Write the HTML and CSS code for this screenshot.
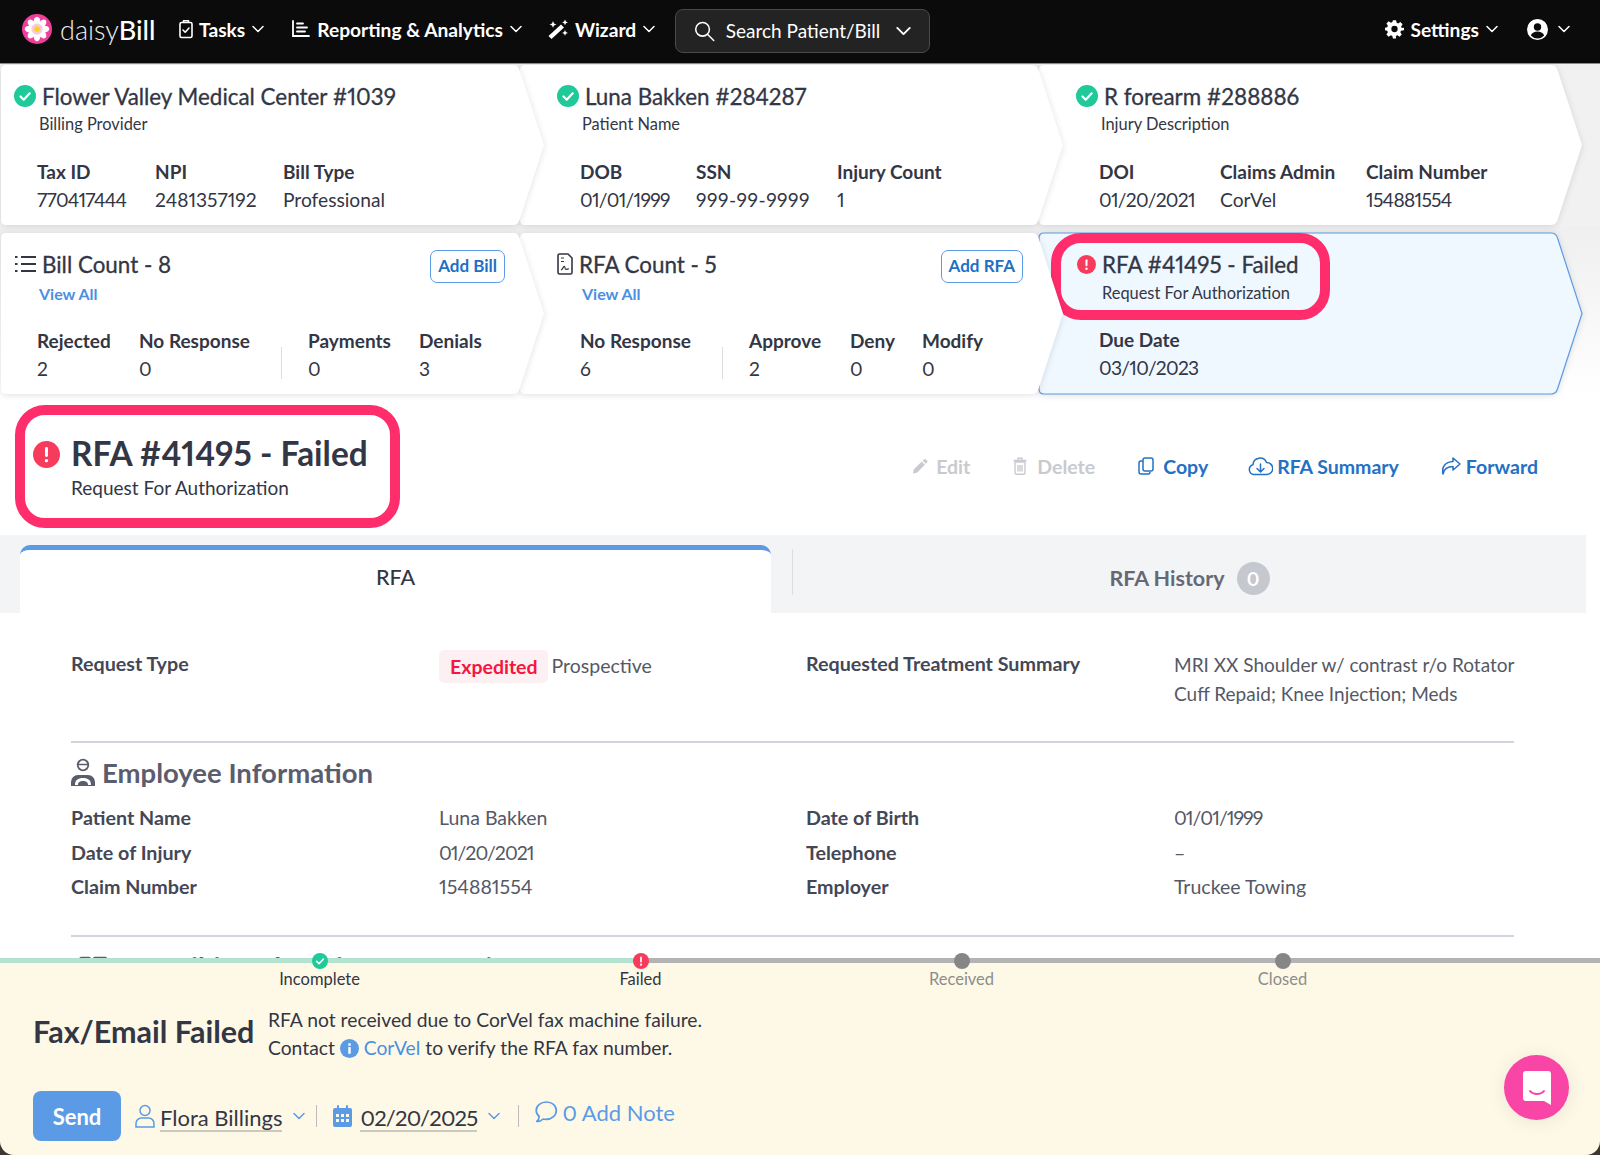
FILE: index.html
```html
<!DOCTYPE html>
<html lang="en">
<head>
  <title>daisyBill - RFA #41495</title>
  <meta charset="utf-8">
  <meta name="viewport" content="width=device-width, initial-scale=1">
  <link rel="stylesheet" href="styles.css">
</head>
<body>
  <svg class="defs" width="0" height="0" aria-hidden="true">
    <defs>
      <symbol id="chev-down" viewBox="0 0 12 8"><path d="M1 1.5l5 5 5-5" fill="none" stroke="currentColor" stroke-width="1.5" stroke-linecap="round" stroke-linejoin="round"/></symbol>
      <symbol id="ok" viewBox="0 0 22 22"><circle cx="11" cy="11" r="11" fill="#1fc99a"/><path d="M6.5 11.5l3.2 3.2 6-6.4" fill="none" stroke="#fff" stroke-width="2.2" stroke-linecap="round" stroke-linejoin="round"/></symbol>
      <symbol id="bad" viewBox="0 0 22 22"><circle cx="11" cy="11" r="11" fill="#f73b5c"/><rect x="9.8" y="4.8" width="2.4" height="8.2" rx="1.2" fill="#fff"/><circle cx="11" cy="16" r="1.4" fill="#fff"/></symbol>
      <symbol id="chevron-card" viewBox="0 0 545 162" preserveAspectRatio="none"><path d="M6 1H513q5 0 6.500 5L544 81 519.500 156q-1.500 5-6.500 5H6q-5 0-5-5V6q0-5 5-5z"/></symbol>
    </defs>
  </svg>

  <nav class="topbar">
    <div class="brand">
      <svg class="brand-mark" viewBox="0 0 32 32">
        <circle cx="16" cy="16" r="16" fill="#ee3f9c"/>
        <g fill="#fff">
          <ellipse cx="16" cy="8.500" rx="3.600" ry="5.600"/>
          <ellipse cx="16" cy="8.500" rx="3.600" ry="5.600" transform="rotate(45 16 16)"/>
          <ellipse cx="16" cy="8.500" rx="3.600" ry="5.600" transform="rotate(90 16 16)"/>
          <ellipse cx="16" cy="8.500" rx="3.600" ry="5.600" transform="rotate(135 16 16)"/>
          <ellipse cx="16" cy="8.500" rx="3.600" ry="5.600" transform="rotate(180 16 16)"/>
          <ellipse cx="16" cy="8.500" rx="3.600" ry="5.600" transform="rotate(225 16 16)"/>
          <ellipse cx="16" cy="8.500" rx="3.600" ry="5.600" transform="rotate(270 16 16)"/>
          <ellipse cx="16" cy="8.500" rx="3.600" ry="5.600" transform="rotate(315 16 16)"/>
        </g>
        <circle cx="16" cy="16" r="6" fill="#fbc9e2"/>
        <circle cx="16" cy="16" r="3" fill="#f7d21e"/>
      </svg>
      <span class="brand-name">daisy<b>Bill</b></span>
    </div>
    <a class="nav-item nav-tasks">
      <svg class="nav-icon" width="14" height="20" viewBox="0 0 14 20" fill="none" stroke="#fff" stroke-width="1.6"><rect x="1" y="3.500" width="12" height="15" rx="1.500"/><path d="M4.500 3.500V1.800h5v1.700" stroke-linejoin="round"/><path d="M4 11l2.200 2.200L10 9" stroke-linecap="round" stroke-linejoin="round"/></svg>
      Tasks <svg class="chev"><use href="#chev-down"/></svg>
    </a>
    <a class="nav-item nav-reports">
      <svg class="nav-icon" width="20" height="20" viewBox="0 0 20 20" fill="none" stroke="#fff" stroke-width="1.8" stroke-linecap="round"><path d="M2 2v15h16"/><path d="M6 4.500h6M6 8.500h10M6 12.500h8"/></svg>
      Reporting &amp; Analytics <svg class="chev"><use href="#chev-down"/></svg>
    </a>
    <a class="nav-item nav-wizard">
      <svg class="nav-icon" width="22" height="21" viewBox="0 0 22 21" fill="#fff"><path d="M1.500 17L14 5.500 17 8.500 4.500 20z"/><path d="M6 2l1 2.400 2.400 1-2.400 1-1 2.400-1-2.400-2.400-1 2.400-1zM18 .5l.9 2 2 .9-2 .9-.9 2-.9-2-2-.9 2-.9zM18 11l.9 2 2 .9-2 .9-.9 2-.9-2-2-.9 2-.9z"/></svg>
      Wizard <svg class="chev"><use href="#chev-down"/></svg>
    </a>
    <div class="search">
      <svg width="24" height="24" viewBox="0 0 24 24" fill="none" stroke="#fff" stroke-width="1.8" stroke-linecap="round"><circle cx="10" cy="10" r="8"/><path d="M16 16l7 7"/></svg>
      <span class="search-text">Search Patient/Bill</span>
      <svg class="chev chev-lg"><use href="#chev-down"/></svg>
    </div>
    <a class="nav-item nav-settings">
      <svg class="nav-icon" width="19" height="20" viewBox="0 0 24 24" fill="#fff"><path fill-rule="evenodd" d="M10 1h4l.7 3.200 1.900.8 2.800-1.800 2.800 2.800-1.800 2.800.8 1.900L24 10.400v3.200l-3.800.7-.8 1.900 1.800 2.800-2.800 2.800-2.800-1.800-1.900.8L14 24h-4l-.7-3.200-1.900-.8-2.800 1.800-2.800-2.800 1.800-2.800-.8-1.900L0 13.600v-3.200l2.800-.7.800-1.900L1.800 5l2.800-2.800 2.800 1.800 1.900-.8zM12 8a4 4 0 100 8 4 4 0 000-8z"/></svg>
      Settings <svg class="chev"><use href="#chev-down"/></svg>
    </a>
    <a class="nav-item nav-user">
      <svg width="21" height="21" viewBox="0 0 21 21"><circle cx="10.500" cy="10.500" r="10.500" fill="#fff"/><circle cx="10.500" cy="8" r="3.700" fill="#0b0b0b"/><path d="M3.800 16.500c1.200-3 4-4 6.700-4s5.500 1 6.700 4a9 9 0 01-13.400 0z" fill="#0b0b0b"/></svg>
      <svg class="chev"><use href="#chev-down"/></svg>
    </a>
  </nav>

  <main class="page">
    <div class="crumbs">
      <section class="step step-first">
        <svg class="step-bg"><use href="#chevron-card"/></svg>
        <h4 class="step-title"><svg class="status"><use href="#ok"/></svg>Flower Valley Medical Center #1039</h4>
        <p class="step-sub">Billing Provider</p>
        <div class="facts">
          <div class="fact col-118"><b>Tax ID</b><span class="num-tight">770417444</span></div>
          <div class="fact col-128"><b>NPI</b><span>2481357192</span></div>
          <div class="fact"><b>Bill Type</b><span>Professional</span></div>
        </div>
      </section>
      <section class="step step-mid">
        <svg class="step-bg"><use href="#chevron-card"/></svg>
        <h4 class="step-title"><svg class="status"><use href="#ok"/></svg>Luna Bakken #284287</h4>
        <p class="step-sub">Patient Name</p>
        <div class="facts">
          <div class="fact col-116"><b>DOB</b><span class="num-tight">01/01/1999</span></div>
          <div class="fact col-141"><b>SSN</b><span class="num-wide">999-99-9999</span></div>
          <div class="fact"><b>Injury Count</b><span>1</span></div>
        </div>
      </section>
      <section class="step step-last">
        <svg class="step-bg"><use href="#chevron-card"/></svg>
        <h4 class="step-title"><svg class="status"><use href="#ok"/></svg>R forearm #288886</h4>
        <p class="step-sub">Injury Description</p>
        <div class="facts">
          <div class="fact col-121"><b>DOI</b><span class="num-tight">01/20/2021</span></div>
          <div class="fact col-146"><b>Claims Admin</b><span>CorVel</span></div>
          <div class="fact"><b>Claim Number</b><span class="num-tight">154881554</span></div>
        </div>
      </section>
    </div>

    <div class="crumbs crumbs-second">
      <section class="step step-first">
        <svg class="step-bg"><use href="#chevron-card"/></svg>
        <div class="step-head">
          <h4 class="step-title">
            <svg class="status status-list" viewBox="0 0 22 18" fill="none" stroke="#333644" stroke-width="1.800"><path d="M7 2h15M7 9h15M7 16h15"/><path d="M1 2h2.500M1 9h2.500M1 16h2.500" stroke-width="2.200"/></svg>Bill Count - 8
          </h4>
          <a class="add-btn">Add Bill</a>
        </div>
        <a class="view-all">View All</a>
        <div class="facts facts-count">
          <div class="fact col-102"><b>Rejected</b><span>2</span></div>
          <div class="fact col-142"><b>No Response</b><span>0</span></div>
          <div class="vrule"></div>
          <div class="fact col-111"><b>Payments</b><span>0</span></div>
          <div class="fact"><b>Denials</b><span>3</span></div>
        </div>
      </section>
      <section class="step step-mid">
        <svg class="step-bg"><use href="#chevron-card"/></svg>
        <div class="step-head step-head-mid">
          <h4 class="step-title">
            <svg class="status status-doc" viewBox="0 0 16 22" fill="none" stroke="#333644" stroke-width="1.600"><path d="M2.500 1H11l4 4v14.500a1.500 1.500 0 01-1.500 1.500h-11A1.500 1.500 0 011 19.500v-17A1.500 1.500 0 012.500 1z"/><path d="M4 5h3M4 8.500h3M4 17c2-1 2.500-4 3.500-3.500s0 3 1.500 3 1.500-1 3-.5" stroke-width="1.200"/></svg>RFA Count - 5
          </h4>
          <a class="add-btn">Add RFA</a>
        </div>
        <a class="view-all">View All</a>
        <div class="facts facts-count">
          <div class="fact col-142"><b>No Response</b><span>6</span></div>
          <div class="vrule"></div>
          <div class="fact col-101"><b>Approve</b><span>2</span></div>
          <div class="fact col-72"><b>Deny</b><span>0</span></div>
          <div class="fact"><b>Modify</b><span>0</span></div>
        </div>
      </section>
      <section class="step step-last step-current">
        <svg class="step-bg"><use href="#chevron-card"/></svg>
        <div class="mark mark-sm">
          <h4 class="step-title"><svg class="status"><use href="#bad"/></svg>RFA #41495 - Failed</h4>
          <p class="step-sub">Request For Authorization</p>
        </div>
        <div class="fact fact-due"><b>Due Date</b><span class="num-tight">03/10/2023</span></div>
      </section>
    </div>

    <header class="rfa-head">
      <div class="mark mark-lg">
        <svg class="status-lg"><use href="#bad"/></svg>
        <div>
          <h1>RFA #41495 - Failed</h1>
          <p>Request For Authorization</p>
        </div>
      </div>
      <div class="actions">
        <a class="act act-off act-edit"><svg width="16" height="17" viewBox="0 0 18 18" fill="currentColor"><path d="M1 17l1-4.500L11 3.500l3.500 3.500L5.500 16zM12 2.500l1.500-1.500a1.400 1.400 0 012 0l1.500 1.500a1.400 1.400 0 010 2L15.500 6z"/></svg>Edit</a>
        <a class="act act-off act-delete"><svg width="14" height="18" viewBox="0 0 14 18" fill="none" stroke="currentColor" stroke-width="1.400"><path d="M2 5h10v11a1.200 1.200 0 01-1.200 1.200H3.200A1.200 1.200 0 012 16zM.5 3.500h13M5 3.500V1.200h4v2.300M5 8v6.500M7 8v6.500M9 8v6.500"/></svg>Delete</a>
        <a class="act act-copy"><svg width="16" height="18" viewBox="0 0 16 18" fill="none" stroke="currentColor" stroke-width="1.500"><rect x="5" y="1" width="10" height="13" rx="2"/><path d="M5 4H3a2 2 0 00-2 2v9a2 2 0 002 2h7a2 2 0 002-2"/></svg>Copy</a>
        <a class="act act-summary"><svg width="25" height="20" viewBox="0 0 25 20" fill="none" stroke="currentColor" stroke-width="1.500" stroke-linecap="round" stroke-linejoin="round"><path d="M6 18.500a5 5 0 01-1-9.800A7 7 0 0118.500 6.500 6 6 0 0119 18.500z"/><path d="M12.500 8v7.500M9 12.500l3.500 3.500 3.500-3.500"/></svg>RFA Summary</a>
        <a class="act act-forward"><svg width="20" height="18" viewBox="0 0 20 18" fill="none" stroke="currentColor" stroke-width="1.500" stroke-linejoin="round"><path d="M12 1l7 6-7 6V9.500C6 9.500 3 12 2 17 .5 10 4 5 12 4.500z"/></svg>Forward</a>
      </div>
    </header>

    <div class="tabs">
      <div class="tab tab-active">RFA</div>
      <div class="tab-rule"></div>
      <div class="tab tab-other">RFA History <span class="tab-badge">0</span></div>
    </div>

    <div class="panel">
      <div class="pairs pairs-top">
        <b class="key">Request Type</b>
        <div class="val"><span class="pill">Expedited</span> <span class="pill-next">Prospective</span></div>
        <b class="key">Requested Treatment Summary</b>
        <div class="val val-wrap">MRI XX Shoulder w/ contrast r/o Rotator Cuff Repaid; Knee Injection; Meds</div>
      </div>
      <h3 class="section-title">
        <svg width="24" height="30" viewBox="0 0 24 30"><circle cx="12" cy="7" r="5.300" fill="none" stroke="#5a5d6e" stroke-width="1.800"/><path d="M7 6.500h10" stroke="#5a5d6e" stroke-width="1.500"/><path d="M0 28v-4a7 7 0 017-7h10a7 7 0 017 7v4z" fill="#5a5d6e"/><path d="M4 27c0-5 3-7 8-7s8 2 8 7h-3c0-3-2-4-5-4s-5 1-5 4z" fill="#fff"/></svg>
        Employee Information
      </h3>
      <div class="pairs">
        <b class="key">Patient Name</b><div class="val">Luna Bakken</div>
        <b class="key">Date of Birth</b><div class="val num-date">01/01/1999</div>
        <b class="key">Date of Injury</b><div class="val num-date">01/20/2021</div>
        <b class="key">Telephone</b><div class="val">–</div>
        <b class="key">Claim Number</b><div class="val">154881554</div>
        <b class="key">Employer</b><div class="val">Truckee Towing</div>
      </div>
      <h3 class="section-title section-next">
        <svg width="28" height="24" viewBox="0 0 30 24" fill="#5a5d6e"><rect x="0" y="2" width="13" height="20" rx="3"/><rect x="15" y="2" width="15" height="20" rx="2"/></svg>
        Prescribing Physician Information
      </h3>
    </div>
  </main>

  <footer class="status-bar">
    <div class="track"><div class="track-done"></div><div class="track-todo"></div></div>
    <div class="stages">
      <div class="stage stage-ok"><svg class="dot"><use href="#ok"/></svg>Incomplete</div>
      <div class="stage stage-fail"><svg class="dot"><use href="#bad"/></svg>Failed</div>
      <div class="stage stage-todo"><span class="dot dot-gray"></span>Received</div>
      <div class="stage stage-todo"><span class="dot dot-gray"></span>Closed</div>
    </div>
    <div class="notice">
      <h2>Fax/Email Failed</h2>
      <p>RFA not received due to CorVel fax machine failure.<br>Contact <svg class="info" viewBox="0 0 20 20"><circle cx="10" cy="10" r="10" fill="#5b9be6"/><rect x="8.700" y="8.500" width="2.600" height="7" fill="#fff"/><rect x="8.700" y="4.500" width="2.600" height="2.600" fill="#fff"/></svg> <a>CorVel</a> to verify the RFA fax number.</p>
    </div>
    <div class="send-row">
      <button class="send">Send</button>
      <svg class="row-icon" width="20" height="24" viewBox="0 0 20 24" fill="none" stroke="#5b9be6" stroke-width="1.500"><circle cx="10" cy="6.500" r="5"/><path d="M1 23v-3.500A5.500 5.500 0 016.500 14h7a5.500 5.500 0 015.500 5.500V23z"/></svg>
      <span class="pick">Flora Billings</span>
      <svg class="chev chev-blue"><use href="#chev-down"/></svg>
      <span class="row-rule"></span>
      <svg class="row-icon row-icon-cal" width="19" height="22" viewBox="0 0 19 22" fill="#5b9be6"><path d="M2 3h15a2 2 0 012 2v15a2 2 0 01-2 2H2a2 2 0 01-2-2V5a2 2 0 012-2z"/><rect x="4" y="0" width="2" height="5" rx="1"/><rect x="13" y="0" width="2" height="5" rx="1"/><path fill="#fef9e6" d="M3 9h3v3H3zM8 9h3v3H8zM13 9h3v3h-3zM3 14h3v3H3zM8 14h3v3H8zM13 14h3v3h-3z"/></svg>
      <span class="pick pick-date">02/20/2025</span>
      <svg class="chev chev-blue"><use href="#chev-down"/></svg>
      <span class="row-rule row-rule-wide"></span>
      <a class="note"><svg width="23" height="22" viewBox="0 0 23 22" fill="none" stroke="#5b9be6" stroke-width="1.700" stroke-linejoin="round"><path d="M11.500 1C6 1 1.200 4.500 1.200 9.500c0 2.500 1.200 4.500 3 6 0 2-1.200 4-2.500 5 3 0 5-1 6.500-2.500 1 .3 1.800.4 2.800.4 5.500 0 10.300-3.900 10.300-8.900S17 1 11.500 1z"/></svg>0 Add Note</a>
    </div>
    <div class="chat-fab">
      <svg width="30" height="36" viewBox="0 0 30 36"><path d="M4 1h22a3 3 0 013 3v31l-7-4H4a3 3 0 01-3-3V4a3 3 0 013-3z" fill="#fff"/><path d="M8 21c3 4 11 4 14 0" fill="none" stroke="#f945a5" stroke-width="2" stroke-linecap="round"/></svg>
    </div>
  </footer>
</body>
</html>
```

FILE: styles.css
```css
* {
    box-sizing: border-box;
}
html, body {
    margin: 0;
    height: 100%;
}
body {
    display: flex;
    flex-direction: column;
    height: 1155px;
    overflow: hidden;
    background: #3a3830;
    font-family: "Lato", "Liberation Sans", sans-serif;
    font-variant-numeric: proportional-nums;
    color: #333644;
}
a {
    cursor: pointer;
}
h1, h2, h3, h4, p {
    margin: 0;
}
.defs {
    position: absolute;
}

/* top bar */
.topbar {
    flex: none;
    display: flex;
    align-items: center;
    height: 64px;
    padding: 0 0 5px 22px;
    background: #0b0b0b;
    border-bottom: 1px solid #8a8a8a;
    color: #fff;
}
.brand {
    display: flex;
    align-items: center;
    width: 157px;
}
.brand-mark {
    width: 30px;
    height: 30px;
    margin-right: 8px;
}
.brand-name {
    font-size: 27px;
    font-weight: 300;
    color: #eee;
}
.brand-name b {
    font-weight: 500;
    color: #fff;
}
.nav-item {
    display: flex;
    align-items: center;
    font-size: 19.2px;
    font-weight: 700;
    white-space: nowrap;
}
.nav-icon {
    margin-right: 6px;
}
.nav-reports {
    margin-left: 27px;
}
.nav-wizard {
    margin-left: 25px;
}
.nav-settings {
    margin-left: auto;
}
.nav-user {
    margin: 0 30px 0 29px;
}
.nav-user .chev {
    margin-left: 10px;
}
.chev {
    width: 12px;
    height: 8px;
    margin-left: 7px;
    color: #fff;
    flex: none;
}
.chev-lg {
    width: 15px;
    height: 10px;
    margin-left: 16px;
}
.chev-blue {
    color: #5b9be6;
    margin-left: 11px;
}
.search {
    display: flex;
    align-items: center;
    width: 255px;
    height: 44px;
    margin: 3px 0 0 20px;
    padding: 0 18px;
    background: #232323;
    border: 1px solid #4a4a4a;
    border-radius: 8px;
}
.search-text {
    margin-left: 11px;
    font-size: 19px;
    white-space: nowrap;
}

/* page */
.page {
    flex: 1;
    min-height: 0;
    overflow: hidden;
    background: #fff;
}

/* chevron cards */
.crumbs {
    display: flex;
    height: 163px;
    background: #f1f1f1;
}
.crumbs-second {
    height: 168px;
    padding-top: 5px;
    background: linear-gradient(#efefef, #fff);
}
.step {
    position: relative;
    flex: none;
    width: 545px;
    height: 162px;
    margin-right: -26px;
    padding: 18px 0 0 61px;
}
.crumbs-second .step {
    height: 163px;
}
.step-first {
    z-index: 3;
    padding-left: 37px;
}
.step-mid {
    z-index: 2;
}
.step-last {
    z-index: 1;
}
.step-bg {
    position: absolute;
    top: 0;
    left: 0;
    width: 100%;
    height: 100%;
    fill: #fff;
    filter: drop-shadow(0 1px 3px rgba(0,0,0,0.12));
}
.step-current .step-bg {
    fill: #eff7ff;
    stroke: #5b9be6;
    stroke-width: 1.2;
}
.step > *:not(.step-bg) {
    position: relative;
}
.step-title {
    display: flex;
    align-items: center;
    height: 28px;
    margin-left: -23px;
    font-size: 22.4px;
    font-weight: 400;
    white-space: nowrap;
    -webkit-text-stroke: 0.3px #333644;
}
.status {
    flex: none;
    width: 22px;
    height: 22px;
    margin-right: 6px;
}
.status-list {
    height: 18px;
}
.status-doc {
    width: 16px;
    height: 22px;
}
.step-sub {
    margin: 4px 0 0 2px;
    font-size: 16.4px;
    line-height: 20px;
}
.facts {
    display: flex;
    margin-top: 24px;
}
.facts-count {
    margin-top: 22px;
}
.fact b {
    display: block;
    font-size: 19px;
    font-weight: 700;
    line-height: 28px;
    white-space: nowrap;
}
.fact span {
    display: block;
    font-size: 19.2px;
    line-height: 28px;
    white-space: nowrap;
}
.fact .num-tight {
    letter-spacing: -0.7px;
}
.fact .num-wide {
    letter-spacing: 0.5px;
}
.col-72 { width: 72px; }
.col-101 { width: 101px; }
.col-102 { width: 102px; }
.col-111 { width: 111px; }
.col-116 { width: 116px; }
.col-118 { width: 118px; }
.col-121 { width: 121px; }
.col-128 { width: 128px; }
.col-141 { width: 141px; }
.col-142 { width: 142px; }
.col-146 { width: 146px; }
.vrule {
    width: 1px;
    height: 32px;
    margin: 20px 26px 0 0;
    background: #ddd;
}
.step-head {
    display: flex;
    align-items: flex-start;
    justify-content: space-between;
    width: 468px;
}
.step-head-mid {
    width: 443px;
}
.add-btn {
    padding: 0 7px;
    height: 33px;
    line-height: 30px;
    border: 1.5px solid #5b9be6;
    border-radius: 7px;
    background: #fff;
    color: #1f6fc4;
    font-size: 17px;
    font-weight: 700;
}
.view-all {
    display: block;
    margin: 0 0 0 2px;
    color: #4a90e2;
    font-size: 16px;
    font-weight: 700;
    line-height: 22px;
}
.mark {
    border: 10px solid #ff2d6b;
    border-radius: 30px;
}
.mark-sm {
    width: 279px;
    height: 87px;
    margin: -17px 0 0 -48px;
    padding: 7px 0 0 16px;
}
.mark-sm .step-title {
    margin-left: 0;
}
.mark-sm .status {
    width: 19px;
    height: 19px;
}
.mark-sm .step-sub {
    margin: 5px 0 0 25px;
}
.fact-due {
    margin-top: 6px;
}

/* rfa header */
.rfa-head {
    display: flex;
    align-items: flex-start;
    justify-content: space-between;
    width: 1586px;
    height: 140px;
    padding: 10px 48px 0 15px;
}
.mark-lg {
    display: flex;
    width: 385px;
    height: 123px;
    padding: 18px 0 0 8px;
}
.status-lg {
    flex: none;
    width: 27px;
    height: 27px;
    margin: 8px 11px 0 0;
}
.rfa-head h1 {
    font-size: 33.4px;
    font-weight: 700;
    line-height: 40px;
    white-space: nowrap;
}
.rfa-head p {
    margin-top: 3px;
    font-size: 19px;
}
.actions {
    display: flex;
    align-items: center;
    height: 44px;
    margin-top: 39px;
}
.act {
    display: flex;
    align-items: center;
    font-size: 19.5px;
    font-weight: 700;
    color: #2471c4;
}
.act-off {
    color: #c9cad0;
}
.act-edit {
    gap: 8px;
}
.act-delete {
    gap: 10px;
    margin-left: 43px;
}
.act-copy {
    gap: 9px;
    margin-left: 43px;
}
.act-summary {
    gap: 4px;
    margin-left: 40px;
}
.act-forward {
    gap: 5px;
    margin-left: 42px;
}

/* tabs */
.tabs {
    display: flex;
    align-items: flex-end;
    width: 1586px;
    height: 78px;
    padding-left: 20px;
    background: #f3f4f6;
}
.tab {
    display: flex;
    align-items: center;
    justify-content: center;
    font-size: 21.5px;
}
.tab-active {
    width: 751px;
    height: 68px;
    background: #fff;
    border-top: 5px solid #5b9be6;
    border-radius: 10px 10px 0 0;
    font-weight: 500;
    padding-bottom: 9px;
}
.tab-rule {
    width: 1px;
    height: 46px;
    margin: 0 0 18px 21px;
    background: #ddd;
}
.tab-other {
    flex: 1;
    height: 68px;
    gap: 12px;
    color: #666975;
    font-weight: 700;
    padding-bottom: 2px;
}
.tab-badge {
    display: flex;
    align-items: center;
    justify-content: center;
    width: 33px;
    height: 33px;
    border-radius: 50%;
    background: #c6c8cf;
    color: #fff;
    font-size: 19px;
}

/* panel */
.panel {
    width: 1586px;
    padding: 38px 72px 0 71px;
}
.pairs {
    display: grid;
    grid-template-columns: 368px 367px 368px 340px;
    row-gap: 8px;
}
.pairs-top {
    height: 92px;
    border-bottom: 2px solid #d3d3df;
}
.key {
    font-size: 19.7px;
    font-weight: 700;
    line-height: 26.500px;
    color: #444755;
}
.val {
    font-size: 19.5px;
    line-height: 26.500px;
    color: #555866;
}
.num-date {
    letter-spacing: -1px;
}
.val-wrap {
    margin-top: -1px;
    font-size: 19px;
    line-height: 29px;
}
.pill {
    display: inline-block;
    height: 33px;
    margin-top: -1px;
    padding: 0 10px 0 11px;
    border-radius: 5px;
    background: #fdf0f2;
    color: #f5163f;
    font-weight: 700;
    line-height: 33px;
    vertical-align: top;
}
.pill-next {
    display: inline-block;
    margin: 2px 0 0 -1px;
}
.section-title {
    display: flex;
    align-items: center;
    gap: 7px;
    height: 60px;
    padding-bottom: 1px;
    color: #5a5d6e;
    font-size: 27.5px;
    font-weight: 700;
}
.section-title + .pairs {
    margin-top: 2px;
    padding-bottom: 34px;
    border-bottom: 2px solid #d3d3df;
}
.section-next {
    padding-left: 8px;
}

/* bottom status bar */
.status-bar {
    position: relative;
    flex: none;
    height: 197px;
    background: #fef9e6;
    border-radius: 0 0 14px 14px;
}
.track {
    display: flex;
    height: 5px;
}
.track-done {
    width: 640px;
    background: #b3e2cf;
}
.track-todo {
    flex: 1;
    background: #b3b3b3;
}
.stages {
    display: grid;
    grid-template-columns: repeat(4, 321px);
    margin-left: 159px;
}
.stage {
    display: flex;
    flex-direction: column;
    align-items: center;
    font-size: 16.500px;
    line-height: 20px;
}
.stage-todo {
    color: #8d8d8d;
}
.dot {
    display: block;
    width: 16px;
    height: 16px;
    margin: -10px 0 0;
}
.dot-gray {
    border-radius: 50%;
    background: #868686;
}
.notice {
    display: flex;
    align-items: center;
    height: 62px;
    margin: 11px 0 0 33px;
}
.notice h2 {
    width: 235px;
    font-size: 30.500px;
    font-weight: 700;
    white-space: nowrap;
}
.notice p {
    margin-top: 5px;
    font-size: 19.300px;
    line-height: 28px;
}
.notice a {
    color: #4a90e2;
}
.info {
    width: 19px;
    height: 19px;
    vertical-align: -3px;
}
.send-row {
    display: flex;
    align-items: center;
    margin: 29px 0 0 33px;
    color: #5b9be6;
}
.send {
    width: 88px;
    height: 50px;
    margin-right: 14px;
    border: 0;
    border-radius: 8px;
    background: #5b9be6;
    color: #fff;
    font-family: inherit;
    font-size: 22px;
    font-weight: 700;
}
.row-icon {
    flex: none;
    margin-right: 5px;
}
.row-icon-cal {
    margin-right: 8px;
}
.pick {
    margin-top: 5px;
    color: #333644;
    font-size: 22px;
    border-bottom: 2px solid #c9c9c0;
    line-height: 24px;
    white-space: nowrap;
}
.pick-date {
    letter-spacing: -0.8px;
}
.row-rule {
    width: 1px;
    height: 22px;
    margin: 0 16px 0 11px;
    background: #bbb;
}
.row-rule-wide {
    margin-left: 18px;
}
.note {
    display: flex;
    align-items: center;
    gap: 4px;
    margin-top: -8px;
    font-size: 22px;
}
.chat-fab {
    position: absolute;
    right: 31px;
    bottom: 35px;
    display: flex;
    align-items: center;
    justify-content: center;
    width: 65px;
    height: 65px;
    border-radius: 50%;
    background: #f945a5;
    box-shadow: 0 2px 20px rgba(0,0,0,0.08);
}
```
